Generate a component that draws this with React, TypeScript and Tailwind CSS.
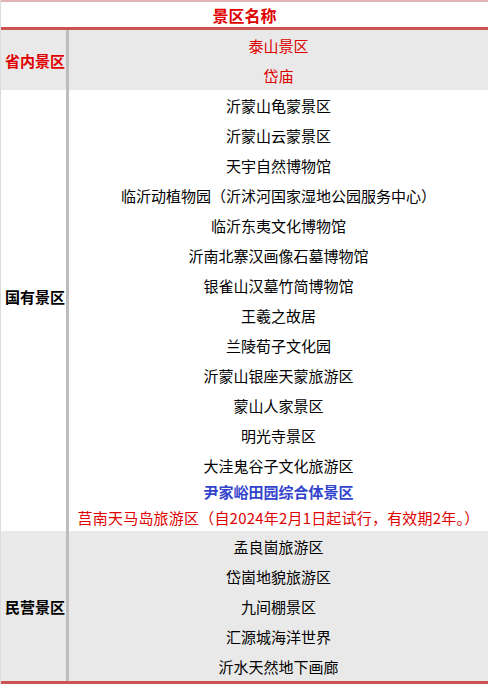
const stateOwned = [
  "沂蒙山龟蒙景区",
  "沂蒙山云蒙景区",
  "天宇自然博物馆",
  "临沂动植物园（沂沭河国家湿地公园服务中心）",
  "临沂东夷文化博物馆",
  "沂南北寨汉画像石墓博物馆",
  "银雀山汉墓竹简博物馆",
  "王羲之故居",
  "兰陵荀子文化园",
  "沂蒙山银座天蒙旅游区",
  "蒙山人家景区",
  "明光寺景区",
  "大洼鬼谷子文化旅游区",
]

const privateOwned = ["孟良崮旅游区", "岱崮地貌旅游区", "九间棚景区", "汇源城海洋世界", "沂水天然地下画廊"]

function Label({ text, red }: { text: string; red?: boolean }) {
  return (
    <div className="w-[68px] shrink-0 flex items-center pl-[4px] pt-[2px] border-r-[3px] border-[#bdbdbd]">
      <span className={`text-[15px] font-bold ${red ? "text-[#e00000]" : "text-black"}`}>{text}</span>
    </div>
  )
}

function Row({ children, className = "" }: { children: React.ReactNode; className?: string }) {
  return <div className={`h-[30px] pt-[2px] flex items-center justify-center ${className}`}>{children}</div>
}

export default function App() {
  return (
    <div
      className="w-[490px] h-[686px] bg-white text-[15px] text-black overflow-hidden"
      style={{ fontFamily: '"Noto Sans CJK SC", "Noto Sans", sans-serif' }}
    >
      <div className="w-[488px] border-l border-[#dcdcdc]">
        <div className="h-[2px] bg-[#e2b4b4]" />
        <div className="h-[28px] pt-[1px] flex items-center justify-center border-b-[3px] border-[#cd5353]">
          <span className="text-[16px] font-bold text-[#e00000]">景区名称</span>
        </div>

        <div className="flex bg-[#e9e9e9]">
          <Label text="省内景区" red />
          <div className="flex-1 flex flex-col text-[#e00000]">
            <Row>泰山景区</Row>
            <Row>岱庙</Row>
          </div>
        </div>

        <div className="flex bg-white">
          <Label text="国有景区" />
          <div className="flex-1 flex flex-col">
            {stateOwned.map((name) => (
              <Row key={name}>{name}</Row>
            ))}
            <div className="h-[23px] pt-[1px] flex items-center justify-center font-bold text-[#3344cc]">尹家峪田园综合体景区</div>
          </div>
        </div>
        <div className="flex bg-white">
          <div className="w-[68px] shrink-0 border-r-[3px] border-[#bdbdbd]" />
          <div className="flex-1 h-[28px] pt-[2px] flex items-center justify-center text-[#e00000] tracking-[0.2px]">
            莒南天马岛旅游区（自2024年2月1日起试行，有效期2年。）
          </div>
        </div>

        <div className="flex bg-[#e9e9e9] border-b-[3px] border-[#cd5353]">
          <Label text="民营景区" />
          <div className="flex-1 flex flex-col">
            {privateOwned.map((name) => (
              <Row key={name}>{name}</Row>
            ))}
          </div>
        </div>
      </div>
    </div>
  )
}
